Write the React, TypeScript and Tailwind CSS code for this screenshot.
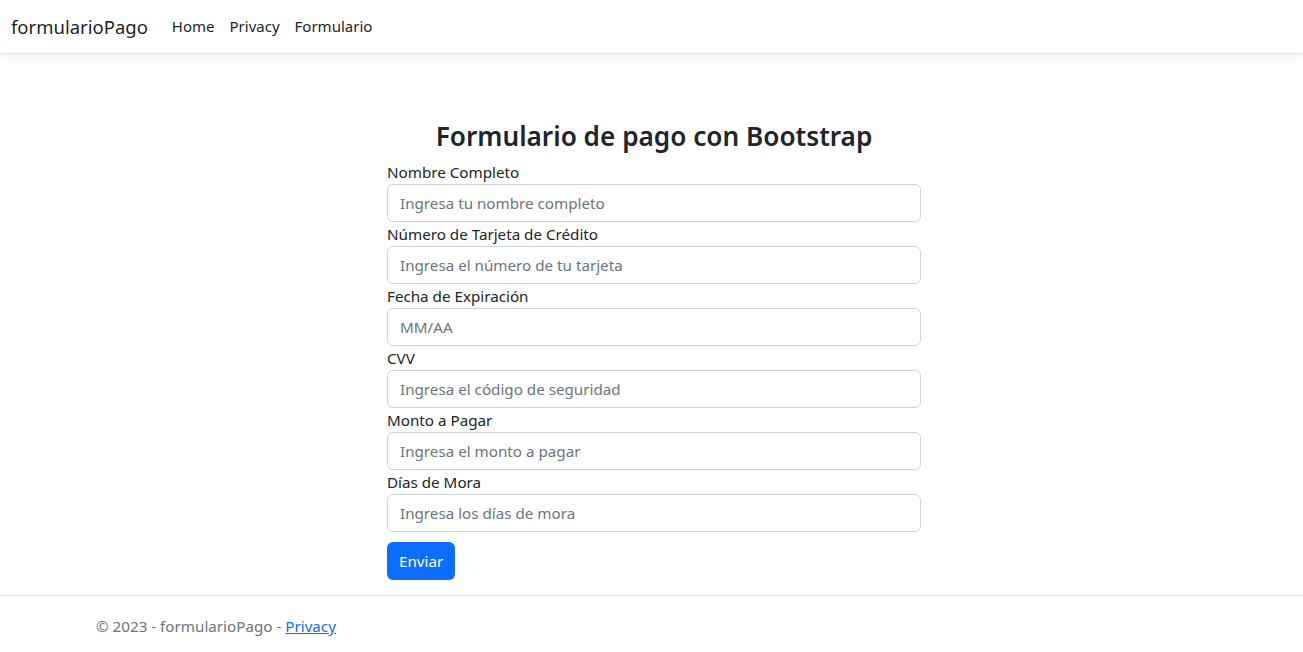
export default function App() {
  const fields = [
    { label: "Nombre Completo", ph: "Ingresa tu nombre completo" },
    { label: "Número de Tarjeta de Crédito", ph: "Ingresa el número de tu tarjeta" },
    { label: "Fecha de Expiración", ph: "MM/AA" },
    { label: "CVV", ph: "Ingresa el código de seguridad" },
    { label: "Monto a Pagar", ph: "Ingresa el monto a pagar" },
    { label: "Días de Mora", ph: "Ingresa los días de mora" },
  ];
  return (
    <div
      className="min-h-[652px] flex flex-col bg-white text-[#212529]"
      style={{ fontFamily: '"Noto Sans", "Open Sans", sans-serif' }}
    >
      <header className="h-[54px] border-b border-[#dee2e6] shadow-[0_4px_8px_rgba(0,0,0,0.05)] flex items-center px-[11px] shrink-0">
        <span className="text-[18.5px] text-black/90 mr-[24px] leading-[30px]">formularioPago</span>
        <nav className="flex gap-[15px] text-[15px] text-[#212529]">
          <span>Home</span>
          <span>Privacy</span>
          <span>Formulario</span>
        </nav>
      </header>
      <main className="flex-1 flex justify-center pl-[5px]">
        <div className="w-[534px] pt-[63px]">
          <h2 className="text-[26.2px] font-semibold leading-[38px] text-center">Formulario de pago con Bootstrap</h2>
          <form className="mt-[5px]">
            {fields.map((f) => (
              <div key={f.label}>
                <label className="block text-[15.2px] leading-[24px]">{f.label}</label>
                <input
                  placeholder={f.ph}
                  className="block w-full h-[38px] px-[12px] text-[15.2px] border border-[#ced4da] rounded-[6px] placeholder:text-[#6c757d] outline-none"
                />
              </div>
            ))}
            <button
              type="button"
              className="mt-[10px] h-[38px] px-[12px] rounded-[6px] bg-[#0d6efd] text-white text-[15.2px]"
            >
              Enviar
            </button>
          </form>
        </div>
      </main>
      <footer className="mt-[15px] border-t border-[#dee2e6] h-[57px] shrink-0">
        <div className="pl-[96px] leading-[60px] text-[15.2px] text-[#6c757d]">
          © 2023 - formularioPago - <a href="#" className="text-[#0d6efd] underline">Privacy</a>
        </div>
      </footer>
    </div>
  );
}
